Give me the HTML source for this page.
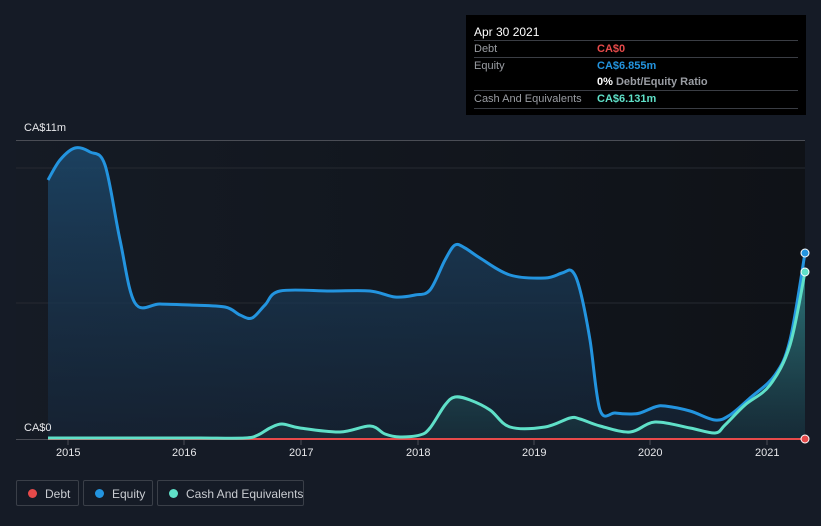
<!DOCTYPE html>
<html><head><meta charset="utf-8"><style>
body{margin:0;width:821px;height:526px;background:#151b26;font-family:"Liberation Sans",sans-serif;overflow:hidden;position:relative}
.tt{position:absolute;left:466px;top:15px;width:340px;height:100px;background:#000;color:#fff;font-size:11px}
.tt .h{position:absolute;left:8px;top:10px;font-size:12px}
.row{position:absolute;left:8px;width:324px;border-top:1px solid #3a3d44;height:17px;line-height:17px;color:#9a9da3;white-space:nowrap}
.row span{position:absolute;left:123px;font-weight:bold}
.lg{position:absolute;top:480px;height:26px;border:1px solid #3a3f48;border-radius:2px;color:#c9ccd1;font-size:12px;line-height:26px;box-sizing:border-box;white-space:nowrap}
.lg i{position:absolute;left:11px;top:8px;width:9px;height:9px;border-radius:50%}
.lg b{font-weight:normal;position:absolute;left:28px}
.ax{position:absolute;color:#e6e7ea;font-size:11px}
</style></head><body>
<svg width="821" height="526" style="position:absolute;left:0;top:0">
<defs>
<linearGradient id="bg" x1="0" x2="1"><stop offset="0" stop-color="#151b25"/><stop offset="1" stop-color="#0f1217"/></linearGradient>
<linearGradient id="ef" x1="0" y1="0" x2="0" y2="1"><stop offset="0" stop-color="#1d4a6e" stop-opacity=".8"/><stop offset="1" stop-color="#16263a" stop-opacity=".6"/></linearGradient>
<linearGradient id="cf" x1="0" y1="0" x2="0" y2="1"><stop offset="0" stop-color="#3aa39a" stop-opacity=".6"/><stop offset="1" stop-color="#1a3d45" stop-opacity=".4"/></linearGradient>
</defs>
<rect x="16" y="140" width="789" height="300" fill="url(#bg)"/>
<line x1="16" y1="140.5" x2="805" y2="140.5" stroke="#4a4d55"/>
<line x1="16" y1="168" x2="805" y2="168" stroke="#262a31"/>
<line x1="16" y1="303" x2="805" y2="303" stroke="#262a31"/>
<line x1="16" y1="439.5" x2="805" y2="439.5" stroke="#4a4d55"/>
<g stroke="#4a4d55"><line x1="68" y1="440" x2="68" y2="445"/><line x1="184" y1="440" x2="184" y2="445"/><line x1="301" y1="440" x2="301" y2="445"/><line x1="418" y1="440" x2="418" y2="445"/><line x1="534" y1="440" x2="534" y2="445"/><line x1="650" y1="440" x2="650" y2="445"/><line x1="767" y1="440" x2="767" y2="445"/></g>
<path id="ea" fill="url(#ef)"/>
<path id="ca" fill="url(#cf)"/>
<path id="el" fill="none" stroke="#2394df" stroke-width="3" stroke-linejoin="round"/>
<polyline fill="none" stroke="#e64a4a" stroke-width="2" points="48,439 805,439"/>
<path id="cl" fill="none" stroke="#5fe0c8" stroke-width="3" stroke-linejoin="round"/>
<circle cx="805" cy="253" r="4" fill="#2394df" stroke="#fff" stroke-width="1"/>
<circle cx="805" cy="272" r="4" fill="#5fe0c8" stroke="#fff" stroke-width="1"/>
<circle cx="805" cy="439" r="4" fill="#e64a4a" stroke="#fff" stroke-width="1"/>
</svg>
<script>
function sm(s){var p=s.trim().split(/\s+/).map(function(a){return a.split(',').map(Number)});var d='M'+p[0][0]+','+p[0][1];
for(var i=0;i<p.length-1;i++){var a=p[i-1]||p[i],b=p[i],c=p[i+1],e=p[i+2]||c;
d+=' C'+(b[0]+(c[0]-a[0])/6)+','+(b[1]+(c[1]-a[1])/6)+' '+(c[0]-(e[0]-b[0])/6)+','+(c[1]-(e[1]-b[1])/6)+' '+c[0]+','+c[1];}return d;}
var E="48,180 60,160 75,148 90,152 105,165 120,240 135,303 160,304 190,305 225,307 240,315 252,318 265,305 280,291 330,291 370,291 395,297 415,295 430,290 445,260 455,245 465,248 480,258 510,275 545,278 562,273 572,271 580,290 590,340 600,410 615,413 630,414 640,413 655,407 665,406 690,411 715,420 730,415 750,398 775,375 790,340 805,253";
var C="48,438 100,438 150,438 200,438 245,438 258,435 270,428 282,424 300,428 340,432 370,426 385,434 400,437 420,435 430,428 445,405 455,397 470,400 490,410 510,427 545,427 570,418 580,419 600,426 630,432 655,422 690,428 715,433 725,425 745,405 770,385 790,345 805,272";
var e=sm(E),c=sm(C);
document.getElementById('el').setAttribute('d',e);
document.getElementById('cl').setAttribute('d',c);
document.getElementById('ea').setAttribute('d',e+' L805,439 L48,439Z');
document.getElementById('ca').setAttribute('d',c+' L805,439 L48,439Z');
</script>
<div class="ax" style="left:24px;top:122px">CA$11m</div>
<div class="ax" style="left:24px;top:422px">CA$0</div>
<div class="ax" style="left:56px;top:447px">2015</div>
<div class="ax" style="left:172px;top:447px">2016</div>
<div class="ax" style="left:289px;top:447px">2017</div>
<div class="ax" style="left:406px;top:447px">2018</div>
<div class="ax" style="left:522px;top:447px">2019</div>
<div class="ax" style="left:638px;top:447px">2020</div>
<div class="ax" style="left:755px;top:447px">2021</div>
<div class="tt">
<div class="h">Apr 30 2021</div>
<div class="row" style="top:25px">Debt<span style="color:#e64a4a">CA$0</span></div>
<div class="row" style="top:42px">Equity<span style="color:#2394df">CA$6.855m</span></div>
<div class="row" style="top:59px;border-top:none"><span style="color:#fff">0% <em style="font-style:normal;color:#9a9da3">Debt/Equity Ratio</em></span></div>
<div class="row" style="top:75px;border-bottom:1px solid #3a3d44">Cash And Equivalents<span style="color:#5fe0c8">CA$6.131m</span></div>
</div>
<div class="lg" style="left:16px;width:63px"><i style="background:#e64a4a"></i><b>Debt</b></div>
<div class="lg" style="left:83px;width:70px"><i style="background:#2394df"></i><b>Equity</b></div>
<div class="lg" style="left:157px;width:147px"><i style="background:#5fe0c8"></i><b>Cash And Equivalents</b></div>
</body></html>
